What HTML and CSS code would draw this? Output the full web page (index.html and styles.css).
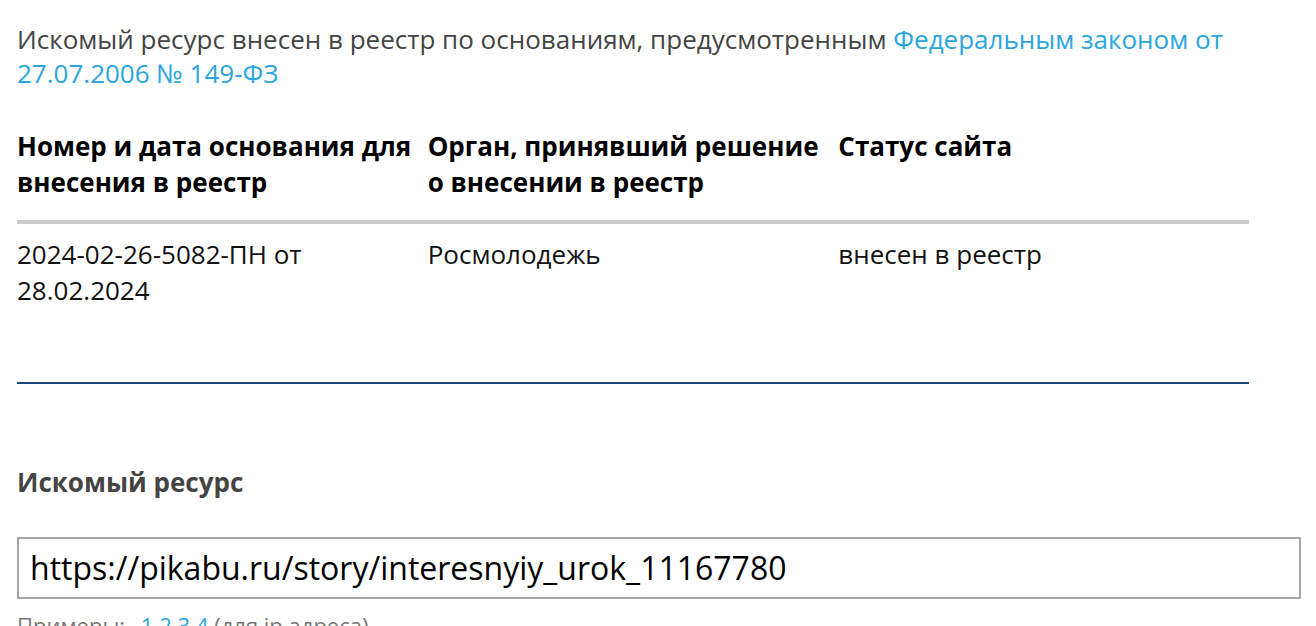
FILE: index.html
```html
<!DOCTYPE html>
<html lang="ru">
<head>
<meta charset="utf-8">
<link rel="stylesheet" href="styles.css">
</head>
<body>
<div class="page">
  <p class="intro">Искомый ресурс внесен в реестр по основаниям, предусмотренным <a href="#">Федеральным законом от 27.07.2006 № 149-ФЗ</a></p>
  <table class="reg">
    <thead>
      <tr>
        <th>Номер и дата основания для внесения в реестр</th>
        <th>Орган, принявший решение о внесении в реестр</th>
        <th>Статус сайта</th>
      </tr>
    </thead>
    <tbody>
      <tr>
        <td>2024-02-26-5082-ПН от 28.02.2024</td>
        <td>Росмолодежь</td>
        <td>внесен в реестр</td>
      </tr>
    </tbody>
  </table>
  <div class="divider"></div>
  <h3 class="label">Искомый ресурс</h3>
  <div class="field">https://pikabu.ru/story/interesnyiy_urok_11167780</div>
  <p class="hint">Примеры: <a href="#" class="ex">1.2.3.4</a> (для ip адреса)</p>
</div>
</body>
</html>
```

FILE: styles.css
```css
html, body {
  margin: 0;
  padding: 0;
  background: #fff;
}
body {
  font-family: "Open Sans", "DejaVu Sans", sans-serif;
  overflow: hidden;
}
.page {
  padding: 22px 0 0 17px;
}
.intro {
  margin: 0;
  width: 1232px;
  font-size: 26px;
  line-height: 34px;
  color: #444;
}
.intro a, .hint a {
  color: #2aa5de;
  text-decoration: none;
}
.reg {
  margin-top: 38px;
  width: 1232px;
  border-collapse: collapse;
  table-layout: fixed;
}
.reg th, .reg td {
  text-align: left;
  vertical-align: top;
  padding: 0 10px 0 0;
  font-size: 26px;
  line-height: 36px;
  color: #000;
}
.reg th {
  font-weight: 700;
  padding-bottom: 20px;
  border-bottom: 4px solid #cccccc;
}
.reg td {
  font-weight: 400;
  padding-top: 12px;
  padding-bottom: 74px;
  color: #111;
}
.divider {
  width: 1232px;
  height: 2px;
  background: #1b4775;
}
.label {
  margin: 80px 0 0;
  font-size: 26px;
  line-height: 36px;
  font-weight: 700;
  color: #444;
}
.field {
  margin-top: 37px;
  box-sizing: border-box;
  width: 1284px;
  height: 62px;
  border: 2px solid #a6a6a6;
  padding: 0 11px;
  font-size: 32px;
  line-height: 58px;
  color: #000;
  white-space: nowrap;
}
.hint {
  margin: 11px 0 0;
  font-size: 22px;
  line-height: 30px;
  color: #777;
}
.hint .ex {
  margin-left: 10px;
}
```
